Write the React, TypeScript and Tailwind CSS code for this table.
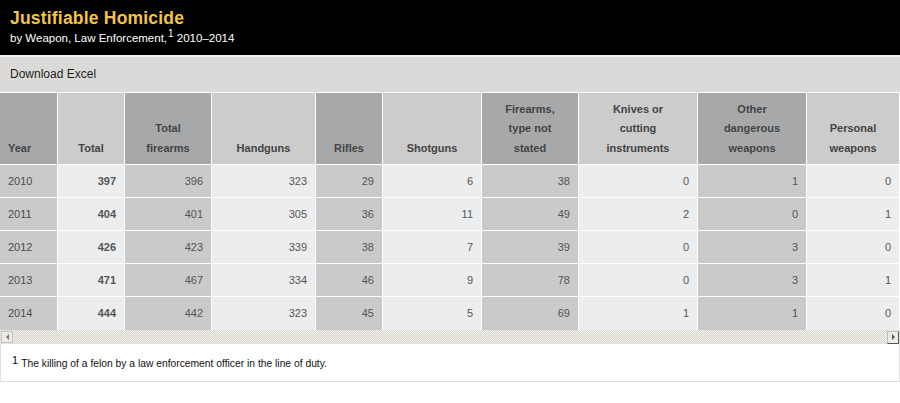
import React from "react";

const cols = [
  { label: ["Year"], dark: true, left: true },
  { label: ["Total"], dark: false, bold: true },
  { label: ["Total", "firearms"], dark: true },
  { label: ["Handguns"], dark: false },
  { label: ["Rifles"], dark: true },
  { label: ["Shotguns"], dark: false },
  { label: ["Firearms,", "type not", "stated"], dark: true },
  { label: ["Knives or", "cutting", "instruments"], dark: false },
  { label: ["Other", "dangerous", "weapons"], dark: true },
  { label: ["Personal", "weapons"], dark: false },
];

const rows = [
  ["2010", "397", "396", "323", "29", "6", "38", "0", "1", "0"],
  ["2011", "404", "401", "305", "36", "11", "49", "2", "0", "1"],
  ["2012", "426", "423", "339", "38", "7", "39", "0", "3", "0"],
  ["2013", "471", "467", "334", "46", "9", "78", "0", "3", "1"],
  ["2014", "444", "442", "323", "45", "5", "69", "1", "1", "0"],
];

export default function App() {
  return (
    <div className="w-[900px] h-[403px] bg-white font-['Liberation_Sans',Arial,sans-serif] overflow-hidden">
      <div className="h-[55px] bg-black pl-[10px] pt-[8px]">
        <div className="text-[17.5px] leading-[20px] font-bold tracking-[0.2px] text-[#f2c54a]">Justifiable Homicide</div>
        <div className="text-[11.5px] leading-[16px] mt-[2px] text-white">
          by Weapon, Law Enforcement,<sup className="text-[10px] ml-[1px] relative -top-[5px]">1</sup> 2010–2014
        </div>
      </div>
      <div className="h-[2px] bg-[#f4f4f3]" />
      <div className="h-[36px] bg-[#dbdad8] border-b border-white flex items-center pl-[10px] pb-[2px] text-[12px] text-[#1e1e1e]">
        Download Excel
      </div>
      <div className="grid grid-cols-[58px_67px_87px_104px_67px_99px_97px_119px_109px_93px]">
        {cols.map((c, i) => (
          <div
            key={i}
            className={`h-[72px] border-r border-b border-white flex flex-col justify-end pb-[6px] text-[11px] leading-[19.5px] font-bold text-[#444] ${
              c.dark ? "bg-[#a6a8a9]" : "bg-[#cbcccb]"
            } ${c.left ? "items-start pl-[8px]" : "items-center text-center"}`}
          >
            {c.label.map((l) => (
              <span key={l}>{l}</span>
            ))}
          </div>
        ))}
        {rows.map((r, ri) =>
          r.map((v, ci) => (
            <div
              key={`${ri}-${ci}`}
              className={`h-[33px] border-r border-white flex items-center text-[11px] ${
                ri < rows.length - 1 ? "border-b" : ""
              } ${cols[ci].dark ? "bg-[#c9cac9]" : "bg-[#ecedee]"} ${
                ci === 0 ? "justify-start pl-[8px] text-[#4d4d4d]" : "justify-end pr-[8px] text-[#555]"
              } ${cols[ci].bold ? "font-bold text-[#333]" : ""}`}
            >
              {v}
            </div>
          ))
        )}
      </div>
      <div className="h-[14px] flex items-center justify-between bg-[repeating-conic-gradient(#d9d6cf_0_25%,#f1efe9_0_50%)] bg-[length:2px_2px]">
        <div className="w-[12px] h-[12px] ml-[1px] bg-[#ecebe7] border border-[#c4c2bc] flex items-center justify-center">
          <div className="w-0 h-0 border-y-[3px] border-y-transparent border-r-[3px] border-r-[#777]" />
        </div>
        <div className="w-[12px] h-[13px] mr-[1px] bg-[#ecebe7] border border-[#c4c2bc] border-b-[#555] border-r-[#555] flex items-center justify-center">
          <div className="w-0 h-0 border-y-[3px] border-y-transparent border-l-[3px] border-l-[#555]" />
        </div>
      </div>
      <div className="h-[38px] border-x border-b border-[#dedede] flex items-center pl-[11px] pt-[2px] text-[#111]">
        <sup className="text-[11px] mr-[3px] relative -top-[4px]">1</sup>
        <span className="text-[10.3px]">The killing of a felon by a law enforcement officer in the line of duty.</span>
      </div>
    </div>
  );
}
